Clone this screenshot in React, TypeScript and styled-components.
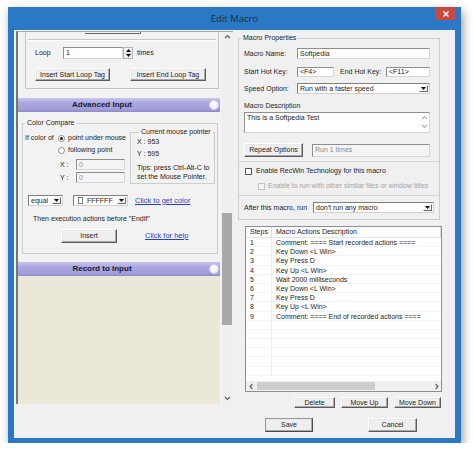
import React from "react";
import styled, { createGlobalStyle } from "styled-components";

const GlobalStyle = createGlobalStyle`
  * { box-sizing: border-box; }
  body {
    margin: 0;
    background: #ffffff;
    font-family: "Liberation Sans", Arial, sans-serif;
    font-size: 7px;
    line-height: 10px;
    color: #1c1c1c;
  }
`;

const Frame = styled.div`
  width: 453px;
  height: 436px;
  margin: 7px 0 0 8px;
  background: #2b78c4;
  box-shadow: 2px 4px 9px rgba(0, 0, 0, 0.4);
  display: flex;
  flex-direction: column;
  padding: 0 6px 5px 6px;
`;

const TitleBar = styled.div`
  height: 23px;
  display: grid;
  grid-template-columns: 1fr auto 1fr;
  align-items: center;
`;

const Title = styled.div`
  font-family: "Open Sans", "Liberation Sans", sans-serif;
  font-size: 9.5px;
  color: #1d2c40;
`;

const CloseButton = styled.div`
  justify-self: end;
  align-self: start;
  margin-right: -1px;
  width: 21px;
  height: 13px;
  background: #c74a40;
  display: flex;
  align-items: center;
  justify-content: center;
`;

const Client = styled.div`
  flex: 1;
  background: #f0f0f0;
  display: grid;
  grid-template-columns: 217px 1fr;
  column-gap: 4px;
  padding: 1px 0 0 2px;
`;

/* ---------- left, scrolled task panel ---------- */

const LeftPanel = styled.div`
  height: 373px;
  border-left: 2px solid #767676;
  border-top: 1px solid #a8a8a8;
  display: grid;
  grid-template-columns: 1fr 11px;
  background: #f2f2f2;
  overflow: hidden;
`;

const ScrollContent = styled.div`
  display: flex;
  flex-direction: column;
`;

const LoopBox = styled.div`
  margin-left: 7px;
  width: 194px;
  height: 57px;
  border: 1px solid #c4c4c4;
  border-top: none;
`;

const ButtonEdge = styled.div`
  margin-left: 59px;
  width: 56px;
  height: 2px;
  border-bottom: 1px solid #6a6a6a;
  border-right: 1px solid #6a6a6a;
`;

const EtchedLine = styled.div`
  margin: 5px 0 0 2px;
  width: 188px;
  height: 2px;
  border-top: 1px solid #c6c6c6;
  border-bottom: 1px solid #ffffff;
`;

const Row = styled.div<{ $top?: number; $h?: number; $pl?: number; $gap?: number }>`
  display: flex;
  align-items: center;
  margin-top: ${(p) => p.$top ?? 0}px;
  height: ${(p) => p.$h ?? 10}px;
  padding-left: ${(p) => p.$pl ?? 0}px;
  gap: ${(p) => p.$gap ?? 0}px;
  white-space: nowrap;
`;

const Label = styled.span<{ $w?: number; $ml?: number; $muted?: boolean }>`
  display: inline-block;
  width: ${(p) => (p.$w ? `${p.$w}px` : "auto")};
  margin-left: ${(p) => p.$ml ?? 0}px;
  color: ${(p) => (p.$muted ? "#a4a4a4" : "#1c1c1c")};
  white-space: nowrap;
`;

const TextBox = styled.div<{ $w: number; $h?: number; $disabled?: boolean }>`
  width: ${(p) => p.$w}px;
  height: ${(p) => p.$h ?? 11}px;
  background: ${(p) => (p.$disabled ? "#f4f4f4" : "#ffffff")};
  color: ${(p) => (p.$disabled ? "#8c8c8c" : "#1c1c1c")};
  border: 1px solid;
  border-color: #8f8f8f #d6d6d6 #d6d6d6 #8f8f8f;
  padding-left: 2px;
  display: flex;
  align-items: center;
  flex-shrink: 0;
`;

const TextArea = styled.div`
  margin-top: 2px;
  width: 186px;
  height: 21px;
  background: #ffffff;
  border: 1px solid;
  border-color: #8f8f8f #d6d6d6 #d6d6d6 #8f8f8f;
  display: grid;
  grid-template-columns: 1fr 9px;
  padding-left: 2px;
`;

const AreaScroll = styled.div`
  display: flex;
  flex-direction: column;
  justify-content: space-between;
  align-items: center;
  padding: 2px 0;
`;

const Spinner = styled.div`
  width: 10px;
  height: 12px;
  display: flex;
  flex-direction: column;
  border: 1px solid #b4b4b4;
  background: #f2f2f2;
`;

const SpinHalf = styled.div`
  flex: 1;
  display: flex;
  align-items: center;
  justify-content: center;
  border-bottom: 1px solid #cfcfcf;
  &:last-child { border-bottom: none; }
`;

const Button = styled.div<{ $w: number; $h: number }>`
  width: ${(p) => p.$w}px;
  height: ${(p) => p.$h}px;
  flex-shrink: 0;
  background: #efefef;
  border: 1px solid;
  border-color: #ffffff #5c5c5c #5c5c5c #ffffff;
  box-shadow: inset -1px -1px 0 #a8a8a8, inset 1px 1px 0 #e8e8e8;
  display: flex;
  align-items: center;
  justify-content: center;
  color: #1c1c1c;
  white-space: nowrap;
`;

const DefaultButton = styled(Button)`
  border-color: #9a9a9a #4a4a4a #4a4a4a #9a9a9a;
`;

const SectionHeader = styled.div<{ $top: number }>`
  margin-top: ${(p) => p.$top}px;
  width: 202px;
  height: 14px;
  display: flex;
  align-items: center;
  background: linear-gradient(#c8c5ee 0%, #aba7df 35%, #a29ed9 80%, #8f8bcb 100%);
  font-size: 8px;
  font-weight: bold;
  color: #1b1b35;
`;

const HeaderText = styled.span`
  flex: 1;
  text-align: center;
  padding-right: 23px;
`;

const HeaderDot = styled.span`
  width: 10px;
  height: 10px;
  margin-right: 1px;
  border-radius: 50%;
  background: radial-gradient(circle at 40% 35%, #ffffff, #e4e4f4);
  border: 1px solid #d8d8ee;
`;

const AdvancedBody = styled.div`
  height: 150px;
  padding-left: 4px;
`;

const Group = styled.fieldset<{ $w: number; $top?: number; $pb?: number }>`
  margin: ${(p) => p.$top ?? 0}px 0 0 0;
  padding: 0 0 ${(p) => p.$pb ?? 0}px 0;
  width: ${(p) => p.$w}px;
  min-width: 0;
  border: 1px solid #cdcdcd;
`;

const Legend = styled.legend`
  margin-left: 2px;
  padding: 0 2px;
  line-height: 10px;
  color: #1c1c1c;
`;

const CompareTop = styled.div`
  display: flex;
`;

const CompareLeft = styled.div`
  width: 107px;
  padding-top: 5px;
  display: flex;
  flex-direction: column;
`;

const PointerGroup = styled(Group)`
  margin-top: -1px;
  padding-left: 6px;
  height: 57px;
`;

const PointerLine = styled.div<{ $top: number }>`
  margin-top: ${(p) => p.$top}px;
  height: 10px;
  line-height: 10px;
  white-space: nowrap;
`;

const Radio = styled.span<{ $on?: boolean }>`
  width: 7px;
  height: 7px;
  border-radius: 50%;
  border: 1px solid #8a8a8a;
  background: #ffffff;
  margin-right: 3px;
  display: inline-flex;
  align-items: center;
  justify-content: center;
  flex-shrink: 0;
  &::after {
    content: "";
    width: 3px;
    height: 3px;
    border-radius: 50%;
    background: ${(p) => (p.$on ? "#202020" : "transparent")};
  }
`;

const Check = styled.span<{ $disabled?: boolean }>`
  width: 7px;
  height: 7px;
  border: 1px solid ${(p) => (p.$disabled ? "#c4c4c4" : "#5a5a5a")};
  background: ${(p) => (p.$disabled ? "#f4f4f4" : "#ffffff")};
  margin-right: ${(p) => (p.$disabled ? 3 : 4)}px;
  flex-shrink: 0;
`;

const ComboBox = styled.div<{ $w: number; $h?: number }>`
  width: ${(p) => p.$w}px;
  height: ${(p) => p.$h ?? 11}px;
  flex-shrink: 0;
  background: #ffffff;
  border: 1px solid;
  border-color: #7f7f7f #d0d0d0 #d0d0d0 #7f7f7f;
  display: flex;
  align-items: center;
  padding-left: 2px;
`;

const ComboText = styled.span`
  flex: 1;
  display: flex;
  align-items: center;
  white-space: nowrap;
`;

const DropButton = styled.span`
  width: 9px;
  height: calc(100% - 2px);
  margin-right: 1px;
  background: #f0f0f0;
  border: 1px solid;
  border-color: #ffffff #6a6a6a #6a6a6a #ffffff;
  display: flex;
  align-items: center;
  justify-content: center;
`;

const Swatch = styled.span`
  width: 5px;
  height: 7px;
  border: 1px solid #777;
  background: #fff;
  margin: 0 4px 0 2px;
`;

const Link = styled.span<{ $ml?: number }>`
  margin-left: ${(p) => p.$ml ?? 0}px;
  color: #1f3fd6;
  text-decoration: underline;
  font-size: 7.5px;
`;

const RecordBody = styled.div`
  flex: 1;
  width: 202px;
  background: #ebe8d9;
`;

const VScroll = styled.div`
  display: flex;
  flex-direction: column;
  background: #efefef;
`;

const ScrollArrow = styled.div<{ $size?: number }>`
  height: 11px;
  width: ${(p) => (p.$size ? `${p.$size}px` : "auto")};
  display: flex;
  align-items: center;
  justify-content: center;
  flex-shrink: 0;
`;

const ScrollTrack = styled.div<{ $horizontal?: boolean }>`
  flex: 1;
  display: flex;
  flex-direction: ${(p) => (p.$horizontal ? "row" : "column")};
`;

const ScrollThumb = styled.div<{ $top: number; $h: number }>`
  margin: ${(p) => p.$top}px 1px 0 0;
  height: ${(p) => p.$h}px;
  background: #a9a9a9;
`;

/* ---------- right column ---------- */

const RightColumn = styled.div`
  display: flex;
  flex-direction: column;
`;

const PropsGroup = styled(Group)`
  margin-left: 1px;
`;

const PropsBody = styled.div`
  padding: 0 0 6px 5px;
  display: flex;
  flex-direction: column;
`;

const Separator = styled.div<{ $top: number }>`
  margin: ${(p) => p.$top}px 0 0 -5px;
  height: 1px;
  background: #d4d4d4;
`;

const ListView = styled.div`
  margin: 6px 0 0 8px;
  width: 197px;
  height: 166px;
  border: 1px solid #8c8f95;
  background: #ffffff;
  display: flex;
  flex-direction: column;
`;

const ListHeader = styled.div`
  display: grid;
  grid-template-columns: 26px 1fr;
  height: 11px;
  border-bottom: 1px solid #e3e3e3;
  flex-shrink: 0;
`;

const HeaderCell = styled.div`
  padding-left: 4px;
  border-right: 1px solid #dcdcdc;
  display: flex;
  align-items: center;
`;

const ListBody = styled.div`
  flex: 1;
`;

const ListRow = styled.div`
  display: grid;
  grid-template-columns: 26px 1fr;
  height: 9.2px;
  line-height: 9px;
  border-bottom: 1px solid #f3f3f3;
`;

const Cell = styled.div<{ $first?: boolean }>`
  padding-left: ${(p) => (p.$first ? 4 : 4)}px;
  border-right: ${(p) => (p.$first ? "1px solid #efefef" : "none")};
  white-space: nowrap;
  overflow: hidden;
`;

const HScroll = styled.div`
  height: 10px;
  display: flex;
  background: #f0f0f0;
  flex-shrink: 0;
`;

const HThumb = styled.div<{ $left: number; $w: number }>`
  margin: 1px 0 0 ${(p) => p.$left}px;
  width: ${(p) => p.$w}px;
  height: 8px;
  background: #cdcdcd;
`;

const Chevron = ({ dir, color = "#5a5a5a" }: { dir: "up" | "down" | "left" | "right"; color?: string }) => {
  const pts = {
    up: "1,4 3.5,1.5 6,4",
    down: "1,2 3.5,4.5 6,2",
    left: "4.5,1 2,3.5 4.5,6",
    right: "2.5,1 5,3.5 2.5,6",
  }[dir];
  return (
    <svg width="7" height="7" viewBox="0 0 7 7">
      <polyline points={pts} fill="none" stroke={color} strokeWidth="1.1" />
    </svg>
  );
};

const Tri = ({ up }: { up?: boolean }) => (
  <svg width="5" height="3" viewBox="0 0 5 3">
    <polygon points={up ? "0,3 5,3 2.5,0" : "0,0 5,0 2.5,3"} fill="#111" />
  </svg>
);

const Combo = ({ w, h, children }: { w: number; h?: number; children: React.ReactNode }) => (
  <ComboBox $w={w} $h={h}>
    <ComboText>{children}</ComboText>
    <DropButton>
      <Tri />
    </DropButton>
  </ComboBox>
);

const actions = [
  "Comment: ==== Start recorded actions ====",
  "Key Down <L Win>",
  "Key Press D",
  "Key Up <L Win>",
  "Wait 2000 milliseconds",
  "Key Down <L Win>",
  "Key Press D",
  "Key Up <L Win>",
  "Comment: ==== End of recorded actions ====",
];

export default function App() {
  const rows = [...actions, ...Array(6).fill("")];

  return (
    <>
      <GlobalStyle />
      <Frame>
        <TitleBar>
          <span />
          <Title>Edit Macro</Title>
          <CloseButton>
            <svg width="6" height="6" viewBox="0 0 6 6">
              <path d="M0.5 0.5 L5.5 5.5 M5.5 0.5 L0.5 5.5" stroke="#fff" strokeWidth="1.4" />
            </svg>
          </CloseButton>
        </TitleBar>

        <Client>
          <LeftPanel>
            <ScrollContent>
              <LoopBox>
                <ButtonEdge />
                <EtchedLine />
                <Row $top={6} $h={12} $pl={9}>
                  <Label $w={28}>Loop</Label>
                  <TextBox $w={60} $h={12}>1</TextBox>
                  <Spinner>
                    <SpinHalf>
                      <Tri up />
                    </SpinHalf>
                    <SpinHalf>
                      <Tri />
                    </SpinHalf>
                  </Spinner>
                  <Label $ml={4}>times</Label>
                </Row>
                <Row $top={9} $h={13} $pl={9} $gap={20}>
                  <Button $w={75} $h={13}>Insert Start Loop Tag</Button>
                  <Button $w={76} $h={13}>Insert End Loop Tag</Button>
                </Row>
              </LoopBox>

              <SectionHeader $top={9}>
                <HeaderText>Advanced Input</HeaderText>
                <HeaderDot />
              </SectionHeader>

              <AdvancedBody>
                <Group $w={196} $top={6} $pb={10}>
                  <Legend>Color Compare</Legend>
                  <CompareTop>
                    <CompareLeft>
                      <Row $h={10} $pl={2}>
                        <Label $w={33}>If color of</Label>
                        <Radio $on />
                        <Label>point under mouse</Label>
                      </Row>
                      <Row $top={2} $h={10} $pl={35}>
                        <Radio />
                        <Label>following point</Label>
                      </Row>
                      <Row $top={4} $h={11} $pl={37}>
                        <Label $w={16}>X :</Label>
                        <TextBox $w={49} $disabled>0</TextBox>
                      </Row>
                      <Row $top={2} $h={11} $pl={37}>
                        <Label $w={16}>Y :</Label>
                        <TextBox $w={49} $disabled>0</TextBox>
                      </Row>
                    </CompareLeft>
                    <PointerGroup $w={85}>
                      <Legend>Current mouse pointer</Legend>
                      <PointerLine $top={0}>X : 953</PointerLine>
                      <PointerLine $top={2}>Y : 595</PointerLine>
                      <PointerLine $top={4}>Tips: press Ctrl-Alt-C to</PointerLine>
                      <PointerLine $top={-1}>set the Mouse Pointer.</PointerLine>
                    </PointerGroup>
                  </CompareTop>
                  <Row $top={11} $h={11} $pl={5}>
                    <Combo w={35}>equal</Combo>
                    <Label $ml={10} />
                    <Combo w={55}>
                      <Swatch />
                      FFFFFF
                    </Combo>
                    <Link $ml={7}>Click to get color</Link>
                  </Row>
                  <Row $top={8} $h={10} $pl={10}>
                    <Label>Then execution actions before "EndIf"</Label>
                  </Row>
                  <Row $top={5} $h={14} $pl={38}>
                    <Button $w={56} $h={14}>Insert</Button>
                    <Link $ml={28}>Click for help</Link>
                  </Row>
                </Group>
              </AdvancedBody>

              <SectionHeader $top={0}>
                <HeaderText>Record to Input</HeaderText>
                <HeaderDot />
              </SectionHeader>
              <RecordBody />
            </ScrollContent>

            <VScroll>
              <ScrollArrow>
                <Chevron dir="up" />
              </ScrollArrow>
              <ScrollTrack>
                <ScrollThumb $top={170} $h={112} />
              </ScrollTrack>
              <ScrollArrow>
                <Chevron dir="down" />
              </ScrollArrow>
            </VScroll>
          </LeftPanel>

          <RightColumn>
            <PropsGroup $w={202} $top={2}>
              <Legend>Macro Properties</Legend>
              <PropsBody>
                <Row $top={5} $h={11}>
                  <Label $w={53}>Macro Name:</Label>
                  <TextBox $w={133}>Softpedia</TextBox>
                </Row>
                <Row $top={8} $h={10}>
                  <Label $w={53}>Start Hot Key:</Label>
                  <TextBox $w={37} $h={10}>&lt;F4&gt;</TextBox>
                  <Label $w={46} $ml={6}>End Hot Key:</Label>
                  <TextBox $w={44} $h={10}>&lt;F11&gt;</TextBox>
                </Row>
                <Row $top={6} $h={11}>
                  <Label $w={53}>Speed Option:</Label>
                  <Combo w={133}>Run with a faster speed</Combo>
                </Row>
                <Row $top={7} $h={9}>
                  <Label>Macro Description</Label>
                </Row>
                <TextArea>
                  <span>This is a Softpedia Test</span>
                  <AreaScroll>
                    <Chevron dir="up" color="#b0b0b0" />
                    <Chevron dir="down" color="#b0b0b0" />
                  </AreaScroll>
                </TextArea>
                <Row $top={10} $h={14} $gap={9}>
                  <Button $w={59} $h={14}>Repeat Options</Button>
                  <TextBox $w={118} $h={13} $disabled>Run 1 times</TextBox>
                </Row>
                <Separator $top={4} />
                <Row $top={4} $h={10} $pl={1}>
                  <Check />
                  <Label>Enable RecWin Technology for this macro</Label>
                </Row>
                <Row $top={5} $h={10} $pl={14}>
                  <Check $disabled />
                  <Label $muted>Enable to run with other similar files or window titles</Label>
                </Row>
                <Separator $top={4} />
                <Row $top={6} $h={11}>
                  <Label $w={69}>After this macro, run</Label>
                  <Combo w={121}>don't run any macro</Combo>
                </Row>
              </PropsBody>
            </PropsGroup>

            <ListView>
              <ListHeader>
                <HeaderCell>Steps</HeaderCell>
                <HeaderCell>Macro Actions Description</HeaderCell>
              </ListHeader>
              <ListBody>
                {rows.map((text, i) => (
                  <ListRow key={i}>
                    <Cell $first>{text ? i + 1 : ""}</Cell>
                    <Cell>{text}</Cell>
                  </ListRow>
                ))}
              </ListBody>
              <HScroll>
                <ScrollArrow $size={10}>
                  <Chevron dir="left" />
                </ScrollArrow>
                <ScrollTrack $horizontal>
                  <HThumb $left={1} $w={118} />
                </ScrollTrack>
                <ScrollArrow $size={10}>
                  <Chevron dir="right" />
                </ScrollArrow>
              </HScroll>
            </ListView>

            <Row $top={5} $h={11} $pl={57} $gap={6}>
              <Button $w={41} $h={11}>Delete</Button>
              <Button $w={47} $h={11}>Move Up</Button>
              <Button $w={47} $h={11}>Move Down</Button>
            </Row>
            <Row $top={10} $h={14} $pl={28} $gap={55}>
              <DefaultButton $w={48} $h={14}>Save</DefaultButton>
              <Button $w={49} $h={14}>Cancel</Button>
            </Row>
          </RightColumn>
        </Client>
      </Frame>
    </>
  );
}
